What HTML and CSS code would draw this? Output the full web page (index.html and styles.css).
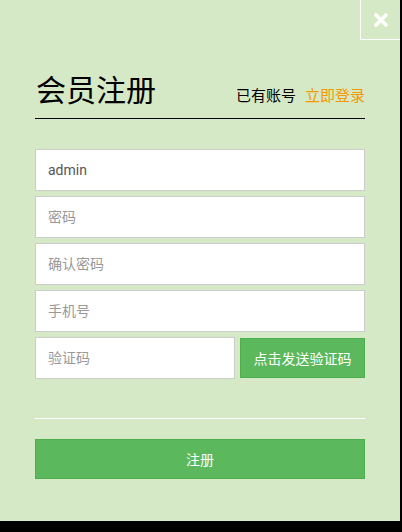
FILE: index.html
```html
<!DOCTYPE html>
<html lang="zh">
<head>
<meta charset="utf-8">
<link rel="stylesheet" href="styles.css">
</head>
<body>
<div class="panel">
  <a class="close" href="#" aria-label="关闭">
    <svg width="14" height="14" viewBox="0 0 14 14"><path d="M2 2L12 12M12 2L2 12" stroke="#fff" stroke-width="3.6" stroke-linecap="round"/></svg>
  </a>
  <div class="form">
    <div class="head">
      <h1 class="title">会员注册</h1>
      <div class="login-tip">已有账号<a class="login-link" href="#">立即登录</a></div>
    </div>
    <div class="fields">
      <input class="field" type="text" value="admin">
      <input class="field" type="password" placeholder="密码">
      <input class="field" type="password" placeholder="确认密码">
      <input class="field" type="text" placeholder="手机号">
      <div class="code-row">
        <input class="field code" type="text" placeholder="验证码">
        <button class="btn send">点击发送验证码</button>
      </div>
    </div>
    <div class="divider"></div>
    <button class="btn submit">注册</button>
  </div>
</div>
</body>
</html>
```
FILE: styles.css
```css
html, body {
  margin: 0;
  padding: 0;
  background: #000;
}
body {
  font-family: Roboto, "Noto Sans CJK SC", sans-serif;
  width: 402px;
  height: 532px;
}
.panel {
  position: relative;
  width: 400px;
  height: 521px;
  background: #d6e9c6;
  box-sizing: border-box;
}
.close {
  position: absolute;
  top: 0;
  right: 0;
  width: 40px;
  height: 40px;
  box-sizing: border-box;
  border-left: 1px solid #fff;
  border-bottom: 1px solid #fff;
  display: flex;
  align-items: center;
  justify-content: center;
}
.close svg { display: block; margin-left: 1px; }
.form {
  padding: 71px 35px 0 35px;
}
.head {
  display: flex;
  align-items: baseline;
  justify-content: space-between;
  border-bottom: 1px solid #000;
  padding-bottom: 7px;
}
.title {
  margin: 0;
  font-size: 30px;
  font-weight: normal;
  line-height: 40px;
  color: #000;
  padding-left: 1px;
}
.login-tip {
  font-size: 15px;
  color: #000;
  display: flex;
  gap: 9px;
}
.login-link {
  color: #f39800;
  text-decoration: none;
}
.fields {
  margin-top: 30px;
  display: flex;
  flex-direction: column;
  gap: 5px;
}
.field {
  display: block;
  box-sizing: border-box;
  width: 100%;
  height: 42px;
  margin: 0;
  border: 1px solid #ccc;
  background: #fff;
  padding: 0 12px;
  font-family: Roboto, "Noto Sans CJK SC", sans-serif;
  font-size: 14px;
  color: #555;
  outline: none;
}
.field::placeholder { color: #999; }
.code-row {
  display: flex;
  align-items: center;
  gap: 5px;
}
.field.code {
  width: 200px;
  flex: none;
}
.btn {
  box-sizing: border-box;
  margin: 0;
  background: #5cb85c;
  border: 1px solid #4cae4c;
  color: #fff;
  font-family: Roboto, "Noto Sans CJK SC", sans-serif;
  font-size: 14px;
  height: 40px;
  padding: 0;
  cursor: pointer;
}
.send {
  flex: 1;
}
.divider {
  margin-top: 39px;
  height: 1px;
  background: #fff;
}
.submit {
  display: block;
  width: 100%;
  margin-top: 20px;
}
```
